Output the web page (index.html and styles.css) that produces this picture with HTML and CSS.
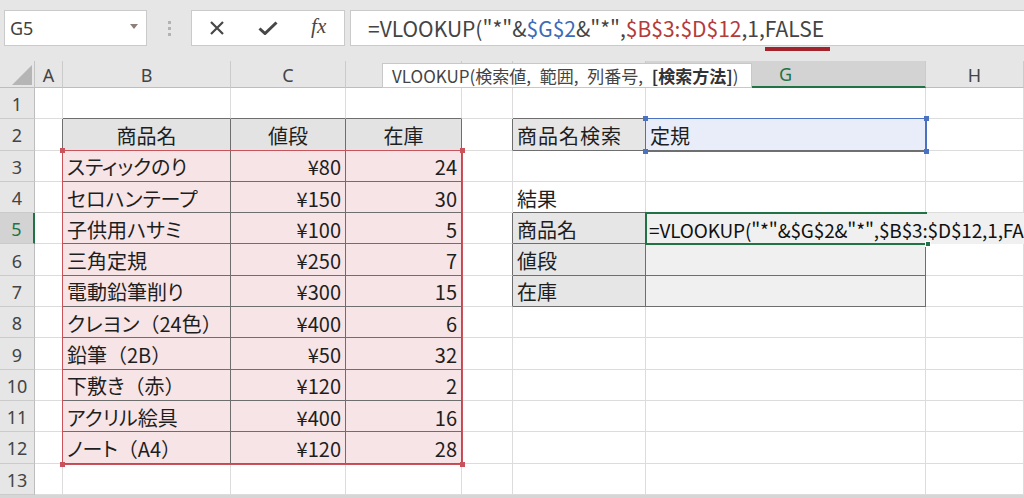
FILE: index.html
```html
<!DOCTYPE html>
<html lang="ja">
<head>
<meta charset="utf-8">
<link rel="stylesheet" href="styles.css">
</head>
<body>
<div class="topbar">
  <div class="namebox"><span>G5</span><span class="tri"></span></div>
  <div class="dots"><i></i><i></i><i></i></div>
  <div class="fnbox">
    <span class="fbtn"><svg width="16" height="14" viewBox="0 0 16 14"><path d="M2 1 L14 13 M14 1 L2 13" stroke="#474747" stroke-width="2.2" fill="none"/></svg></span>
    <span class="fbtn"><svg width="20" height="14" viewBox="0 0 20 14"><path d="M1.5 7.5 L7 12.5 L18.5 1.5" stroke="#474747" stroke-width="3" fill="none" stroke-linejoin="miter"/></svg></span>
    <span class="fbtn fx">fx</span>
  </div>
  <div class="formula">=VLOOKUP("*"&amp;<span class="ref-b">$G$2</span>&amp;"*",<span class="ref-r">$B$3:$D$12</span>,1,<span class="arg">FALSE</span></div>
</div>

<div class="sheet">
  <!-- header row -->
  <div class="corner"><span class="corner-tri"></span></div>
  <div class="ch">A</div><div class="ch">B</div><div class="ch">C</div><div class="ch">D</div>
  <div class="ch">E</div><div class="ch">F</div><div class="ch ch-sel">G</div><div class="ch">H</div>

  <!-- row 1 -->
  <div class="rh">1</div>
  <div class="c"></div><div class="c db"></div><div class="c db"></div><div class="c db"></div>
  <div class="c"></div><div class="c db"></div><div class="c db"></div><div class="c"></div>

  <!-- row 2 -->
  <div class="rh">2</div>
  <div class="c dr"></div>
  <div class="c hd db dr">商品名</div><div class="c hd db dr">値段</div><div class="c hd db dr">在庫</div>
  <div class="c dr"></div>
  <div class="c lg db dr wide">商品名検索</div><div class="c lb db dr">定規</div><div class="c"></div>

  <!-- row 3 -->
  <div class="rh">3</div>
  <div class="c dr"></div>
  <div class="c pk db dr">スティックのり</div><div class="c pk num db dr">¥80</div><div class="c pk num db dr">24</div>
  <div class="c"></div><div class="c"></div><div class="c"></div><div class="c"></div>

  <!-- row 4 -->
  <div class="rh">4</div>
  <div class="c dr"></div>
  <div class="c pk db dr">セロハンテープ</div><div class="c pk num db dr">¥150</div><div class="c pk num db dr">30</div>
  <div class="c"></div><div class="c db">結果</div><div class="c db"></div><div class="c"></div>

  <!-- row 5 -->
  <div class="rh rh-sel">5</div>
  <div class="c dr"></div>
  <div class="c pk db dr">子供用ハサミ</div><div class="c pk num db dr">¥100</div><div class="c pk num db dr">5</div>
  <div class="c dr"></div><div class="c lg db dr">商品名</div><div class="c lg2 db dr"></div><div class="c"></div>

  <!-- row 6 -->
  <div class="rh">6</div>
  <div class="c dr"></div>
  <div class="c pk db dr">三角定規</div><div class="c pk num db dr">¥250</div><div class="c pk num db dr">7</div>
  <div class="c dr"></div><div class="c lg db dr">値段</div><div class="c lg2 db dr"></div><div class="c"></div>

  <!-- row 7 -->
  <div class="rh">7</div>
  <div class="c dr"></div>
  <div class="c pk db dr">電動鉛筆削り</div><div class="c pk num db dr">¥300</div><div class="c pk num db dr">15</div>
  <div class="c dr"></div><div class="c lg db dr">在庫</div><div class="c lg2 db dr"></div><div class="c"></div>

  <!-- row 8 -->
  <div class="rh">8</div>
  <div class="c dr"></div>
  <div class="c pk db dr">クレヨン<span class="fw">（</span>24色<span class="fw">）</span></div><div class="c pk num db dr">¥400</div><div class="c pk num db dr">6</div>
  <div class="c"></div><div class="c"></div><div class="c"></div><div class="c"></div>

  <!-- row 9 -->
  <div class="rh">9</div>
  <div class="c dr"></div>
  <div class="c pk db dr">鉛筆<span class="fw">（</span>2B<span class="fw">）</span></div><div class="c pk num db dr">¥50</div><div class="c pk num db dr">32</div>
  <div class="c"></div><div class="c"></div><div class="c"></div><div class="c"></div>

  <!-- row 10 -->
  <div class="rh">10</div>
  <div class="c dr"></div>
  <div class="c pk db dr">下敷き<span class="fw">（</span>赤<span class="fw">）</span></div><div class="c pk num db dr">¥120</div><div class="c pk num db dr">2</div>
  <div class="c"></div><div class="c"></div><div class="c"></div><div class="c"></div>

  <!-- row 11 -->
  <div class="rh">11</div>
  <div class="c dr"></div>
  <div class="c pk db dr">アクリル絵具</div><div class="c pk num db dr">¥400</div><div class="c pk num db dr">16</div>
  <div class="c"></div><div class="c"></div><div class="c"></div><div class="c"></div>

  <!-- row 12 -->
  <div class="rh">12</div>
  <div class="c dr"></div>
  <div class="c pk db dr">ノート<span class="fw">（</span>A4<span class="fw">）</span></div><div class="c pk num db dr">¥120</div><div class="c pk num db dr">28</div>
  <div class="c"></div><div class="c"></div><div class="c"></div><div class="c"></div>

  <!-- row 13 -->
  <div class="rh">13</div>
  <div class="c"></div><div class="c"></div><div class="c"></div><div class="c"></div>
  <div class="c"></div><div class="c"></div><div class="c"></div><div class="c"></div>

  <!-- overlays -->
  <div class="sel sel-red"><i class="h tl"></i><i class="h tr"></i><i class="h bl"></i><i class="h br"></i></div>
  <div class="sel sel-blue"><i class="h tl"></i><i class="h tr"></i><i class="h bl"></i><i class="h br"></i></div>
  <div class="editor">=VLOOKUP("*"&amp;$G$2&amp;"*",$B$3:$D$12,1,FALSE)</div>
  <div class="sel sel-green"><i class="fill"></i></div>
  <div class="tip">VLOOKUP(検索値, 範囲, 列番号, <b>[検索方法]</b>)</div>
</div>
<div class="bottom"></div>
</body>
</html>
```

FILE: styles.css
```css
html, body {
  margin: 0;
  padding: 0;
}
body {
  width: 1024px;
  height: 498px;
  overflow: hidden;
  background: #ffffff;
  font-family: "Noto Sans CJK JP", "Noto Sans", sans-serif;
  color: #222;
}

/* ---------- top bar ---------- */
.topbar {
  height: 61px;
  box-sizing: border-box;
  background: #e6e6e6;
  display: flex;
  align-items: flex-start;
  padding-top: 10px;
}
.namebox {
  margin-left: 4px;
  width: 143px;
  height: 36px;
  box-sizing: border-box;
  background: #fff;
  border: 1px solid #cacaca;
  display: flex;
  align-items: center;
  justify-content: space-between;
  padding: 0 8px 0 5px;
  font-family: "Noto Sans", sans-serif;
  font-size: 18px;
  color: #404040;
}
.tri {
  width: 0;
  height: 0;
  border-left: 4.5px solid transparent;
  border-right: 4.5px solid transparent;
  border-top: 5px solid #8d7f76;
  margin-bottom: 4px;
}
.dots {
  width: 44px;
  display: flex;
  flex-direction: column;
  align-items: center;
  gap: 3px;
  padding-top: 11px;
}
.dots i {
  display: block;
  width: 3px;
  height: 3px;
  background: #b3b3b3;
}
.fnbox {
  width: 154px;
  height: 36px;
  box-sizing: border-box;
  background: #fff;
  border: 1px solid #cacaca;
  display: flex;
  align-items: center;
}
.fbtn {
  width: 52px;
  display: flex;
  justify-content: center;
  align-items: center;
}
.fx {
  font-family: "Liberation Serif", serif;
  font-style: italic;
  font-size: 21px;
  color: #474747;
  margin-top: -3px;
}
.formula {
  flex: 1;
  margin-left: 5px;
  height: 36px;
  box-sizing: border-box;
  background: #fff;
  border: 1px solid #cacaca;
  border-right: none;
  padding-left: 17px;
  display: flex;
  align-items: center;
  white-space: nowrap;
  font-family: "Noto Sans CJK JP", sans-serif;
  font-size: 21px;
  color: #444;
}
.ref-b { color: #3d6bb7; }
.ref-r { color: #b53a3a; }
.arg {
  position: relative;
}
.arg::after {
  content: "";
  position: absolute;
  left: 0;
  right: -6px;
  bottom: -8px;
  height: 4px;
  background: #a3232d;
}

/* ---------- sheet ---------- */
.sheet {
  position: relative;
  display: grid;
  grid-template-columns: 35px 28px 168px 115px 116px 51px 133px 280px 1fr;
  grid-template-rows: 27px repeat(13, 31.3px);
  font-size: 20px;
  font-feature-settings: "palt";
}
.fw { font-feature-settings: normal; }
.wide { letter-spacing: 1px; }
.corner {
  background: #e6e6e6;
  border-right: 1px solid #c4c4c4;
  border-bottom: 1px solid #bdbdbd;
  position: relative;
}
.corner-tri {
  position: absolute;
  right: 2px;
  bottom: 2px;
  width: 20px;
  height: 20px;
  background: #b5b5b5;
  clip-path: polygon(100% 0, 100% 100%, 0 100%);
}
.ch {
  background: #e6e6e6;
  border-right: 1px solid #cbcbcb;
  border-bottom: 1px solid #bdbdbd;
  display: flex;
  align-items: center;
  justify-content: center;
  font-family: "Noto Sans", sans-serif;
  font-size: 18px;
  color: #444;
  padding-top: 1px;
  box-sizing: border-box;
}
.ch-sel {
  background: #d3d3d3;
  color: #217346;
  border-bottom: 2px solid #217346;
}
.rh {
  background: #e6e6e6;
  border-right: 1px solid #bdbdbd;
  border-bottom: 1px solid #cbcbcb;
  display: flex;
  align-items: center;
  justify-content: center;
  font-family: "Noto Sans", sans-serif;
  font-size: 18px;
  color: #444;
  box-sizing: border-box;
  padding-top: 2px;
}
.rh-sel {
  background: #d3d3d3;
  color: #217346;
  border-right: 2px solid #217346;
}
.c {
  border-right: 1px solid #dcdcdc;
  border-bottom: 1px solid #dcdcdc;
  box-sizing: border-box;
  display: flex;
  align-items: center;
  padding: 2px 4px 0 4px;
  white-space: nowrap;
  overflow: hidden;
  color: #1e1e1e;
}
.db { border-bottom-color: #6e6e6e; }
.dr { border-right-color: #6e6e6e; }
.hd {
  background: #e3e3e3;
  justify-content: center;
}
.pk { background: #f7e4e6; }
.num { justify-content: flex-end; }
.lg { background: #e6e6e6; }
.lg2 { background: #f0f0f0; }
.lb { background: #e9ecf9; }

/* selection overlays */
.sel {
  position: absolute;
  pointer-events: none;
  box-sizing: border-box;
}
.sel-red {
  grid-column: 3 / 6;
  grid-row: 4 / 14;
  top: -1px; left: -1px; right: -1px; bottom: -1px;
  border: 1.5px solid #c9525b;
}
.sel-blue {
  grid-column: 8 / 9;
  grid-row: 3 / 4;
  top: -1px; left: -1px; right: -1px; bottom: -1px;
  border: 1.5px solid #4a72c0;
}
.h {
  position: absolute;
  width: 5px;
  height: 5px;
}
.sel-red .h { background: #c9525b; }
.sel-blue .h { background: #4a72c0; }
.h.tl { left: -3px; top: -3px; }
.h.tr { right: -3px; top: -3px; }
.h.bl { left: -3px; bottom: -3px; }
.h.br { right: -3px; bottom: -3px; }
.sel-green {
  grid-column: 8 / 9;
  grid-row: 6 / 7;
  top: -1px; left: -1px; right: -1px; bottom: -1px;
  border: 2px solid #217346;
  border-right: none;
}
.fill {
  position: absolute;
  right: -4px;
  bottom: -4px;
  width: 6px;
  height: 6px;
  background: #217346;
  border: 1px solid #fff;
  box-sizing: border-box;
}
.editor {
  position: absolute;
  grid-column: 8 / 10;
  grid-row: 6 / 7;
  top: 0; left: 0; right: 0; bottom: 0;
  background: #f0f0f0;
  display: flex;
  align-items: center;
  padding: 2px 0 0 3px;
  white-space: nowrap;
  overflow: hidden;
  font-size: 19px;
  letter-spacing: -0.15px;
  font-feature-settings: normal;
  color: #111;
}
.tip {
  position: absolute;
  left: 382px;
  top: 2px;
  width: 370px;
  height: 25px;
  box-sizing: border-box;
  background: #fff;
  border: 1px solid #c8c8c8;
  padding-left: 9px;
  display: flex;
  align-items: center;
  white-space: pre;
  font-size: 17px;
  word-spacing: 5px;
  font-feature-settings: normal;
  color: #444;
}
.tip b { font-weight: 700; color: #333; }
.bottom {
  height: 4px;
  background: #d6d6d6;
}
```
